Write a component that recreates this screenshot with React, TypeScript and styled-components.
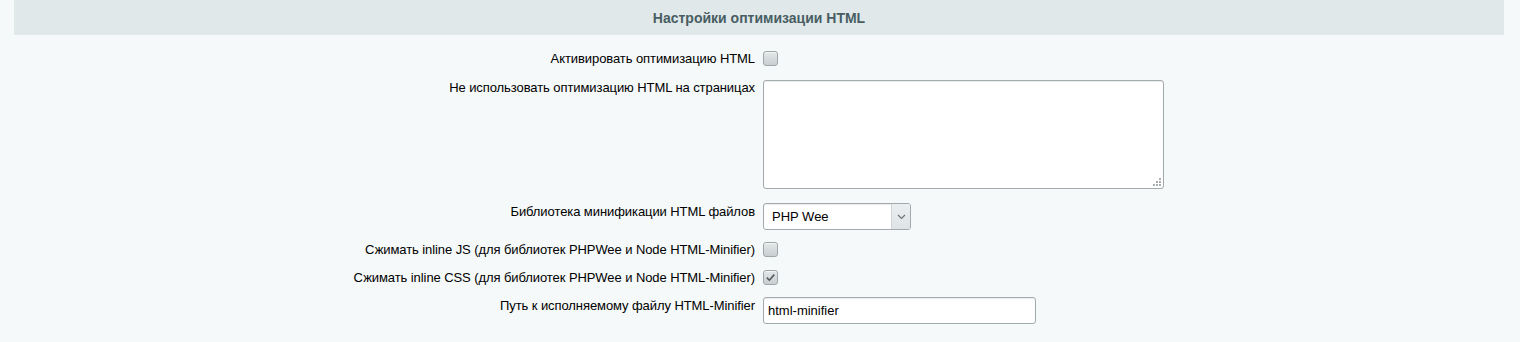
import styled, { createGlobalStyle } from 'styled-components'

const GlobalStyle = createGlobalStyle`
    html, body {
        margin: 0;
        padding: 0;
        background: #f5f9f9;
    }
    body {
        font-family: "Liberation Sans", Arial, sans-serif;
        font-size: 13px;
        color: #000;
    }
`

const Page = styled.div`
    width: 1520px;
    height: 342px;
    padding: 0 16px 0 14px;
    box-sizing: border-box;
    background: #f5f9f9;
`

const Heading = styled.div`
    height: 35px;
    background: #e0e8ea;
    display: flex;
    align-items: center;
    justify-content: center;
    font-weight: bold;
    font-size: 14px;
    color: #485e63;
`

const Form = styled.div`
    padding-top: 9px;
`

const Row = styled.div<{ $pad?: string }>`
    display: grid;
    grid-template-columns: 1fr 1fr;
    align-items: start;
    padding: ${p => p.$pad || '7px 0'};
`

const Label = styled.div<{ $offset?: number }>`
    text-align: right;
    padding-right: 4px;
    padding-top: ${p => p.$offset || 0}px;
    line-height: 15px;
    letter-spacing: -0.08px;
    white-space: nowrap;
`

const Control = styled.div`
    padding-left: 4px;
    display: flex;
`

const Check = styled.span<{ $checked?: boolean }>`
    width: 15px;
    height: 15px;
    box-sizing: border-box;
    border: 1px solid #9fa6a9;
    border-radius: 3px;
    background: linear-gradient(180deg, #e3e7e8 0%, #c9cfd1 100%);
    box-shadow: inset 0 1px 0 rgba(255,255,255,0.6);
    display: flex;
    align-items: center;
    justify-content: center;

    svg {
        width: 11px;
        height: 11px;
        display: ${p => (p.$checked ? 'block' : 'none')};
    }
`

const Field = styled.div<{ $w: number; $h: number }>`
    position: relative;
    width: ${p => p.$w}px;
    height: ${p => p.$h}px;
    box-sizing: border-box;
    border: 1px solid #a3aaae;
    border-radius: 3px;
    background: #fff;
    box-shadow: inset 0 1px 1px rgba(0,0,0,0.08);
    display: flex;
    align-items: center;
    padding-left: 4px;
    font-size: 13px;
    color: #000;
`

const SelectText = styled.span`
    flex: 1;
    padding-left: 4px;
`

const Arrow = styled.span`
    width: 18px;
    align-self: stretch;
    border-left: 1px solid #d0d5d7;
    background: linear-gradient(180deg, #eceff0 0%, #dfe3e5 100%);
    border-radius: 0 2px 2px 0;
    display: flex;
    align-items: center;
    justify-content: center;

    svg {
        width: 9px;
        height: 6px;
    }
`

const Grip = styled.svg`
    position: absolute;
    right: 2px;
    bottom: 2px;
    width: 8px;
    height: 8px;
`

function Checkbox({ checked }: { checked?: boolean }) {
    return (
        <Check $checked={checked}>
            <svg viewBox="0 0 11 11">
                <path d="M1.8 5.6 L4.4 8.2 L9.3 2.6" fill="none" stroke="#54595b" strokeWidth="1.6" />
            </svg>
        </Check>
    )
}

export default function App() {
    return (
        <Page>
            <GlobalStyle />
            <Heading>Настройки оптимизации HTML</Heading>
            <Form>
                <Row>
                    <Label>Активировать оптимизацию HTML</Label>
                    <Control><Checkbox /></Control>
                </Row>
                <Row>
                    <Label $offset={-1}>Не использовать оптимизацию HTML на страницах</Label>
                    <Control>
                        <Field $w={401} $h={109}>
                            <Grip viewBox="0 0 8 8">
                                <g fill="#a8aeb1">
                                    <rect x="6" y="0" width="2" height="2" />
                                    <rect x="3" y="3" width="2" height="2" />
                                    <rect x="6" y="3" width="2" height="2" />
                                    <rect x="0" y="6" width="2" height="2" />
                                    <rect x="3" y="6" width="2" height="2" />
                                    <rect x="6" y="6" width="2" height="2" />
                                </g>
                            </Grip>
                        </Field>
                    </Control>
                </Row>
                <Row $pad="7px 0 5px">
                    <Label $offset={1}>Библиотека минификации HTML файлов</Label>
                    <Control>
                        <Field $w={148} $h={27}>
                            <SelectText>PHP Wee</SelectText>
                            <Arrow>
                                <svg viewBox="0 0 9 6">
                                    <path d="M1 1 L4.5 4.5 L8 1" fill="none" stroke="#6b7275" strokeWidth="1.2" />
                                </svg>
                            </Arrow>
                        </Field>
                    </Control>
                </Row>
                <Row $pad="7px 0 6px">
                    <Label>Сжимать inline JS (для библиотек PHPWee и Node HTML-Minifier)</Label>
                    <Control><Checkbox /></Control>
                </Row>
                <Row $pad="7px 0 6px">
                    <Label>Сжимать inline CSS (для библиотек PHPWee и Node HTML-Minifier)</Label>
                    <Control><Checkbox checked /></Control>
                </Row>
                <Row $pad="6px 0">
                    <Label $offset={1}>Путь к исполняемому файлу HTML-Minifier</Label>
                    <Control>
                        <Field $w={273} $h={27}>html-minifier</Field>
                    </Control>
                </Row>
            </Form>
        </Page>
    )
}
